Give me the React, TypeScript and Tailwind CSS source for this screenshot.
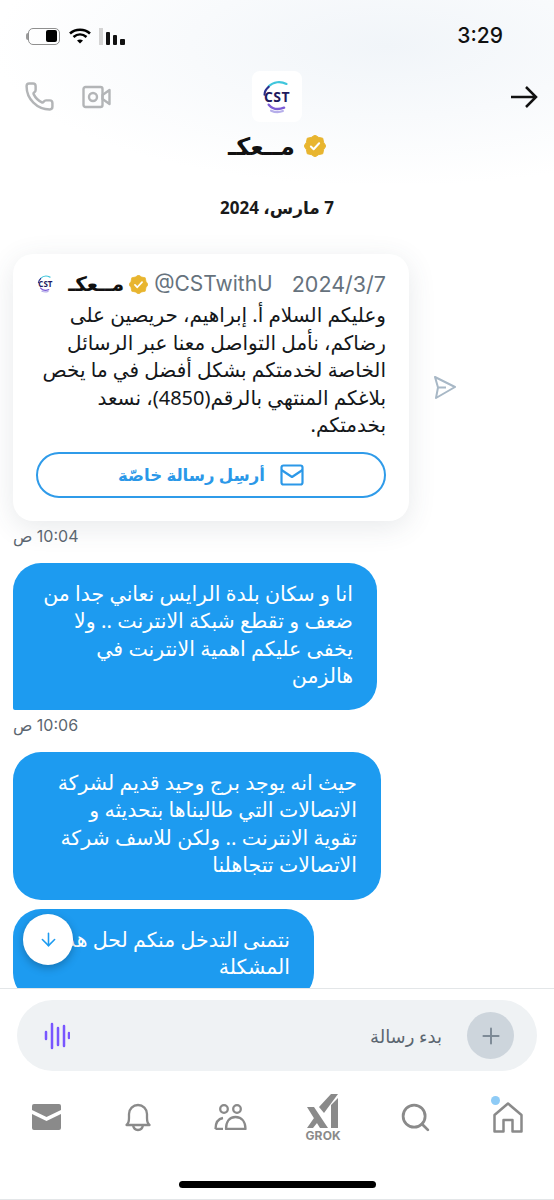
import { ArrowDown, Phone, Plus, Search } from 'lucide-react';

const arabic = "font-['Noto_Sans','DejaVu_Sans',sans-serif]";
const latin = "font-['Inter','DejaVu_Sans',sans-serif]";

function VerifiedBadge({ size }: { size: number }) {
  const points = Array.from({ length: 16 }, (_, i) => {
    const r = i % 2 === 0 ? 12 : 10.2;
    const a = (i * Math.PI) / 8;
    return `${12 + r * Math.cos(a)},${12 + r * Math.sin(a)}`;
  }).join(' ');
  return (
    <svg width={size} height={size} viewBox="0 0 24 24" className="shrink-0">
      <polygon points={points} fill="#e8b52f" stroke="#e8b52f" strokeWidth="1" strokeLinejoin="round" />
      <path d="M7.5 12.5l3 3 6-6.5" fill="none" stroke="#fff" strokeWidth="2.2" strokeLinecap="round" strokeLinejoin="round" />
    </svg>
  );
}

function CstLogo({ size, textClass }: { size: number; textClass: string }) {
  return (
    <div className="relative flex items-center justify-center" style={{ width: size, height: size }}>
      <svg viewBox="0 0 32 32" className="absolute inset-0 h-full w-full" fill="none" strokeLinecap="round">
        <path d="M24 5C19 2.500 13 3 9 7" stroke="#3fc6dc" strokeWidth="1.800" />
        <path d="M9 7.500C6.500 9.500 5.500 12 5.500 14" stroke="#2b2f8f" strokeWidth="1.800" />
        <path d="M9 22.500c3 3.500 8 4.500 13 2.500" stroke="#7c5cd6" strokeWidth="2" />
        <path d="M11 27.500c3.500 1.500 7 1.500 10 .3" stroke="#b6aeea" strokeWidth="1.800" />
      </svg>
      <span className={`relative font-['Open_Sans',sans-serif] font-bold text-[#1d1a5e] ${textClass}`}>CST</span>
    </div>
  );
}

function StatusBar() {
  return (
    <div className="flex h-[71px] items-start justify-between pl-[26px] pr-[51px] pt-[25px]">
      <div className="flex h-[22px] items-center">
        <div className="h-[7px] w-[2px] rounded-l bg-[#9a9a9a]" />
        <div className="flex h-[17px] w-[32px] items-center justify-end rounded-[5px] border border-[#8f8f8f] p-[2px]">
          <div className="h-[12px] w-[11px] rounded-[2px] bg-black" />
        </div>
        <svg width="22" height="16" viewBox="0 0 22 16" className="ml-[9px]">
          <path d="M1 5.500C6.500.5 15.500.5 21 5.500" fill="none" stroke="#000" strokeWidth="2.600" />
          <path d="M4.500 9c4-3.400 9-3.400 13 0" fill="none" stroke="#000" strokeWidth="2.600" />
          <path d="M8 12.500c2-1.500 4-1.500 6 0L11 15.500z" fill="#000" />
        </svg>
        <div className="ml-[8px] flex h-[17px] items-end gap-[3px]">
          <div className="h-[17px] w-[4px] bg-[#d4d4d4]" />
          <div className="h-[13px] w-[4px] rounded-[1px] bg-[#111]" />
          <div className="h-[10px] w-[4px] rounded-[1px] bg-[#111]" />
          <div className="h-[6px] w-[5px] rounded-[1px] bg-[#111]" />
        </div>
      </div>
      <span className={`${latin} text-[21px] font-medium leading-[22px] text-[#111]`}>3:29</span>
    </div>
  );
}

function Header() {
  return (
    <div className="flex flex-col items-center">
      <div className="grid w-full grid-cols-[1fr_auto_1fr] items-center pl-[24px] pr-[24px]">
        <div className="flex items-center gap-[27px] text-[#b3b5b7]">
          <Phone size={31} strokeWidth={1.900} />
          <svg width="29" height="24" viewBox="0 0 29 24" fill="none" stroke="currentColor" strokeWidth="2.400">
            <rect x="1.500" y="2" width="19" height="20" rx="2" />
            <circle cx="11" cy="12" r="4" />
            <path d="M20.500 10l7-5v14l-7-5z" strokeLinejoin="round" />
          </svg>
        </div>
        <div className="flex h-[51px] w-[50px] items-center justify-center rounded-[8px] bg-white">
          <CstLogo size={38} textClass="text-[14px] tracking-[0.5px]" />
        </div>
        <div className="-mr-[8px] flex justify-end text-[#111]">
          <svg width="28" height="24" viewBox="0 0 28 24" fill="none" stroke="currentColor" strokeWidth="2.500">
            <path d="M1 12h25M16 2l10 10-10 10" />
          </svg>
        </div>
      </div>
      <div dir="rtl" className="mt-[6px] flex h-[36px] items-center gap-[9px]">
        <VerifiedBadge size={22} />
        <span className={`${arabic} text-[24px] font-bold leading-[36px] text-[#111]`}>مــعكـ</span>
      </div>
    </div>
  );
}

function TweetCard() {
  return (
    <div className="flex items-center">
      <div className="w-[396px] rounded-[20px] bg-white pb-[23px] pl-[23px] pr-[23px] pt-[16px] shadow-[0_6px_28px_rgba(60,70,90,0.12)]">
        <div dir="rtl" className="flex h-[28px] items-center text-[#66727d]">
          <span dir="ltr" className={`${latin} text-[21.500px] leading-[28px]`}>2024/3/7</span>
          <span dir="ltr" className={`${latin} mr-[19px] text-[21px] leading-[28px]`}>@CSTwithU</span>
          <div className="mr-[6px]"><VerifiedBadge size={19} /></div>
          <span className={`${arabic} mr-[5px] text-[20px] font-bold leading-[28px] text-[#111]`}>مــعكـ</span>
          <div className="mr-[13px]"><CstLogo size={20} textClass="text-[8px]" /></div>
        </div>
        <div dir="rtl" className={`${arabic} mt-[3px] text-[20px] leading-[27.500px] text-[#14171a]`}>
          <div className="whitespace-nowrap">وعليكم السلام أ. إبراهيم، حريصين على</div>
          <div className="whitespace-nowrap">رضاكم، نأمل التواصل معنا عبر الرسائل</div>
          <div className="whitespace-nowrap">الخاصة لخدمتكم بشكل أفضل في ما يخص</div>
          <div className="whitespace-nowrap">بلاغكم المنتهي بالرقم(4850)، نسعد</div>
          <div className="whitespace-nowrap">بخدمتكم.</div>
        </div>
        <div dir="rtl" className="mt-[13px] flex h-[46px] items-center justify-center gap-[15px] rounded-full border-2 border-[#2f9be9] text-[#2b98e8]">
          <svg width="24" height="22" viewBox="0 0 24 22" fill="none" stroke="currentColor" strokeWidth="2.200" strokeLinejoin="round">
            <rect x="1.500" y="1.500" width="21" height="19" rx="2" />
            <path d="M1.500 6L12 13l10.500-7" />
          </svg>
          <span className={`${arabic} text-[16.500px] font-bold leading-[24px]`}>أرسِل رسالة خاصّة</span>
        </div>
      </div>
      <svg width="24" height="24" viewBox="0 0 24 24" fill="none" stroke="#a8b8c6" strokeWidth="2" strokeLinejoin="round" className="ml-[24px]">
        <path d="M2 2l20 10L3 23l2-10.500zM5 12.500h8" />
      </svg>
    </div>
  );
}

function Timestamp({ text }: { text: string }) {
  return <div dir="rtl" className={`${latin} w-fit whitespace-nowrap text-[16px] leading-[20px] text-[#5b6670]`}>{text}</div>;
}

function Bubble({ lines, width, corner }: { lines: string[]; width: number; corner: string }) {
  return (
    <div
      dir="rtl"
      style={{ width }}
      className={`${arabic} ${corner} shrink-0 bg-[#1d9bf0] pl-[20px] pr-[24px] pt-[17px] text-[20.500px] leading-[27.500px] text-white`}
    >
      {lines.map((line) => (
        <div key={line} className="whitespace-nowrap">{line}</div>
      ))}
    </div>
  );
}

function GrokIcon() {
  return (
    <div className="flex flex-col items-center">
      <svg width="32" height="35" viewBox="0 0 32 35" fill="currentColor">
        <path d="M0 14h7l14 21h-8zM0 35l7-10 3 5-4 5zM12 14L24 1h7L17 20zM24 12l7-7v30h-7z" />
      </svg>
      <span className={`${latin} mt-[2px] text-[12px] font-bold leading-[12px] tracking-[0.2px]`}>GROK</span>
    </div>
  );
}

function BottomNav() {
  return (
    <div className="grid h-[92px] grid-cols-6 items-center text-[#8a8a8a]">
      <div className="flex justify-center">
        <svg width="29" height="26" viewBox="0 0 29 26">
          <path d="M2 0h25a2 2 0 0 1 2 2v4L14.500 13 0 6V2a2 2 0 0 1 2-2zM0 10l14.500 7L29 10v14a2 2 0 0 1-2 2H2a2 2 0 0 1-2-2z" fill="currentColor" />
        </svg>
      </div>
      <div className="flex justify-center">
        <svg width="26" height="30" viewBox="0 0 26 30" fill="none" stroke="currentColor" strokeWidth="2.300" strokeLinejoin="round">
          <path d="M1.500 23c2-1.500 2.500-4 2.500-7v-4a9 9 0 0 1 18 0v4c0 3 .5 5.500 2.500 7z" />
          <path d="M8 23c.5 3 2.500 5 5 5s4.500-2 5-5" />
        </svg>
      </div>
      <div className="flex justify-center">
        <svg width="33" height="26" viewBox="0 0 33 26" fill="none" stroke="currentColor" strokeWidth="2.300">
          <circle cx="10" cy="5" r="3.800" />
          <circle cx="23" cy="5" r="3.800" />
          <path d="M1.500 25c0-5 2-10 7.500-11M1.500 25H9" />
          <path d="M12 25c0-7 3-12 9.500-12S31.500 18 31.500 25z" strokeLinejoin="round" />
        </svg>
      </div>
      <div className="flex justify-center pt-[1px]">
        <GrokIcon />
      </div>
      <div className="flex justify-center">
        <Search size={33} strokeWidth={2} />
      </div>
      <div className="flex justify-center">
        <div className="relative">
          <svg width="30" height="31" viewBox="0 0 30 31" fill="none" stroke="currentColor" strokeWidth="2.500" strokeLinejoin="round" className="block">
            <path d="M1.500 13L15 1.500 28.500 13v16.500h-9V18h-9v11.500h-9z" />
          </svg>
          <div className="absolute left-[-2px] top-[-6px] h-[9px] w-[9px] rounded-full bg-[#8ecbf6]" />
        </div>
      </div>
    </div>
  );
}

export default function App() {
  return (
    <div className="flex h-[1200px] w-[554px] flex-col overflow-hidden bg-white">
      <div className="h-[184px] shrink-0 bg-[radial-gradient(ellipse_at_70%_25%,#f1f5f9_0%,#ffffff_72%)]">
        <StatusBar />
        <Header />
      </div>

      <div className="relative flex min-h-0 flex-1 flex-col overflow-hidden pl-[13px]">
        <div className="flex h-[70px] shrink-0 items-start justify-center pr-[13px] pt-[12px]">
          <span dir="rtl" className={`${arabic} text-[17px] font-bold leading-[24px] text-[#1a1a1a]`}>7 مارس، 2024</span>
        </div>
        <TweetCard />
        <div className="mt-[5px]"><Timestamp text="10:04 ص" /></div>
        <div className="mt-[17px]">
          <Bubble
            width={364}
            corner="rounded-[28px] rounded-bl-[2px] pb-[20px]"
            lines={['انا و سكان بلدة الرايس نعاني جدا من', 'ضعف و تقطع شبكة الانترنت .. ولا', 'يخفى عليكم اهمية الانترنت في', 'هالزمن']}
          />
        </div>
        <div className="mt-[5px]"><Timestamp text="10:06 ص" /></div>
        <div className="mt-[17px]">
          <Bubble
            width={368}
            corner="rounded-[28px] pb-[21px]"
            lines={['حيث انه يوجد برج وحيد قديم لشركة', 'الاتصالات التي طالبناها بتحديثه و', 'تقوية الانترنت .. ولكن للاسف شركة', 'الاتصالات تتجاهلنا']}
          />
        </div>
        <div className="mt-[9px]">
          <Bubble
            width={301}
            corner="rounded-[28px] pb-[20px]"
            lines={['نتمنى التدخل منكم لحل هذه', 'المشكلة']}
          />
        </div>
        <div className="absolute left-[23px] top-[730px] flex h-[51px] w-[50px] items-center justify-center rounded-full bg-white text-[#1d9bf0] shadow-[0_3px_8px_rgba(0,0,0,0.25)]">
          <ArrowDown size={21} strokeWidth={1.800} />
        </div>
      </div>

      <div className="h-[212px] shrink-0 border-b border-t border-[#e3e6e8] bg-white">
        <div className="px-[17px] pt-[11px]">
          <div className="flex h-[71px] items-center justify-between rounded-full bg-[#eff2f4] pl-[27px] pr-[23px]">
            <svg width="26" height="28" viewBox="0 0 26 28" stroke="#7856ff" strokeWidth="2.500" strokeLinecap="round">
              <path d="M2 10v7M8 2v24M14 6v17M20 4v20M25 11v5" />
            </svg>
            <div className="flex items-center gap-[25px]">
              <span dir="rtl" className={`${arabic} text-[18px] leading-[24px] text-[#5b6670]`}>بدء رسالة</span>
              <div className="flex h-[47px] w-[47px] items-center justify-center rounded-full bg-[#cdd5dc] text-[#7d8a96]">
                <Plus size={26} strokeWidth={1.800} />
              </div>
            </div>
          </div>
        </div>
        <BottomNav />
        <div className="flex justify-center pt-[18px]">
          <div className="h-[7px] w-[197px] rounded-full bg-black" />
        </div>
      </div>
    </div>
  );
}
